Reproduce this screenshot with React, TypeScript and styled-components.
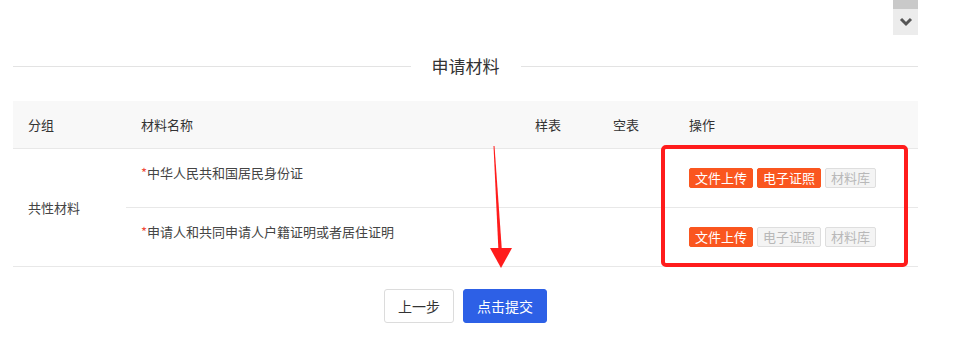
import React from 'react';
import styled, { createGlobalStyle } from 'styled-components';

const GlobalStyle = createGlobalStyle`
  html, body {
    margin: 0;
    padding: 0;
    background: #fff;
  }
  body {
    font-family: 'Noto Sans CJK SC', 'Noto Sans', sans-serif;
    color: #333;
  }
`;

const Page = styled.div`
  position: relative;
  width: 960px;
  height: 350px;
  overflow: hidden;
`;

const TopBar = styled.div`
  height: 35px;
  display: flex;
  justify-content: flex-end;
  padding-right: 42px;
`;

const ScrollStub = styled.div`
  width: 25px;
  display: flex;
  flex-direction: column;
`;

const ScrollThumb = styled.div`
  height: 9px;
  background: #c9c9c9;
`;

const ScrollButton = styled.div`
  flex: 1;
  background: #ececec;
  display: flex;
  align-items: center;
  justify-content: center;
`;

const TitleRow = styled.div`
  margin-top: 19px;
  height: 24px;
  padding: 0 42px 0 13px;
  display: flex;
  align-items: center;
`;

const TitleLine = styled.div`
  flex: 1;
  height: 1px;
  background: #e3e3e3;
`;

const Title = styled.h3`
  margin: 0;
  padding: 0 21px;
  font-size: 17px;
  font-weight: 400;
  color: #333;
  line-height: 24px;
`;

const Table = styled.table`
  margin: 23px 0 0 13px;
  width: 905px;
  border-collapse: collapse;
  table-layout: fixed;
  font-size: 13px;
`;

const HeadCell = styled.th<{ $w?: number }>`
  box-sizing: border-box;
  width: ${(p) => (p.$w ? `${p.$w}px` : 'auto')};
  height: 47px;
  padding: 0 0 0 15px;
  background: #f8f8f8;
  text-align: left;
  font-weight: 400;
  color: #333;
  border-bottom: 1px solid #e8e8e8;
`;

const Cell = styled.td<{ $lift?: boolean }>`
  box-sizing: border-box;
  height: 59px;
  padding: ${(p) => (p.$lift ? '0 0 10px 15px' : '0 0 0 15px')};
  color: #444;
  border-bottom: 1px solid #e8e8e8;
  vertical-align: middle;
  white-space: nowrap;
`;

const Required = styled.span`
  color: #f04a3a;
`;

const Tags = styled.div`
  display: flex;
  gap: 4px;
`;

const Tag = styled.span<{ $on?: boolean }>`
  display: inline-flex;
  align-items: center;
  height: 20px;
  padding: 0 5px;
  border-radius: 2px;
  font-size: 13px;
  white-space: nowrap;
  box-sizing: border-box;
  background: ${(p) => (p.$on ? '#fa561f' : '#f4f4f4')};
  color: ${(p) => (p.$on ? '#fff' : '#b8b8b8')};
  border: 1px solid ${(p) => (p.$on ? '#fa561f' : '#dedede')};
`;

const Actions = styled.div`
  width: 905px;
  margin: 22px 0 0 13px;
  display: flex;
  justify-content: center;
  gap: 9px;
`;

const Button = styled.button<{ $primary?: boolean }>`
  height: 34px;
  padding: 0 13px;
  border-radius: 3px;
  font-family: inherit;
  font-size: 14px;
  cursor: pointer;
  background: ${(p) => (p.$primary ? '#2d60e6' : '#fff')};
  color: ${(p) => (p.$primary ? '#fff' : '#333')};
  border: 1px solid ${(p) => (p.$primary ? '#2d60e6' : '#dcdcdc')};
`;

const Highlight = styled.div`
  position: absolute;
  left: 661px;
  top: 145px;
  width: 247px;
  height: 122px;
  box-sizing: border-box;
  border: 4px solid #ff1c1c;
  border-radius: 5px;
  pointer-events: none;
`;

const Arrow = styled.svg`
  position: absolute;
  left: 486px;
  top: 146px;
  pointer-events: none;
`;

const rows = [
  { name: '中华人民共和国居民身份证', ecert: true },
  { name: '申请人和共同申请人户籍证明或者居住证明', ecert: false },
];

export default function App() {
  return (
    <Page>
      <GlobalStyle />
      <TopBar>
        <ScrollStub>
          <ScrollThumb />
          <ScrollButton>
            <svg width="14" height="10" viewBox="0 0 14 10">
              <path d="M2 2 L7 7 L12 2" fill="none" stroke="#555" strokeWidth="3" />
            </svg>
          </ScrollButton>
        </ScrollStub>
      </TopBar>

      <TitleRow>
        <TitleLine />
        <Title>申请材料</Title>
        <TitleLine />
      </TitleRow>

      <Table>
        <thead>
          <tr>
            <HeadCell $w={113}>分组</HeadCell>
            <HeadCell $w={394}>材料名称</HeadCell>
            <HeadCell $w={78}>样表</HeadCell>
            <HeadCell $w={76}>空表</HeadCell>
            <HeadCell>操作</HeadCell>
          </tr>
        </thead>
        <tbody>
          {rows.map((r, i) => (
            <tr key={r.name}>
              {i === 0 && <Cell rowSpan={2}>共性材料</Cell>}
              <Cell $lift>
                <Required>*</Required>
                {r.name}
              </Cell>
              <Cell />
              <Cell />
              <Cell>
                <Tags>
                  <Tag $on>文件上传</Tag>
                  <Tag $on={r.ecert}>电子证照</Tag>
                  <Tag>材料库</Tag>
                </Tags>
              </Cell>
            </tr>
          ))}
        </tbody>
      </Table>

      <Actions>
        <Button>上一步</Button>
        <Button $primary>点击提交</Button>
      </Actions>

      <Highlight />
      <Arrow width="30" height="126" viewBox="0 0 30 126">
        <polygon points="7.5,0 8.5,0 16,106 12.5,106" fill="#ff1c1c" />
        <polygon points="4,102 26,102 15,122" fill="#ff1c1c" />
      </Arrow>
    </Page>
  );
}
